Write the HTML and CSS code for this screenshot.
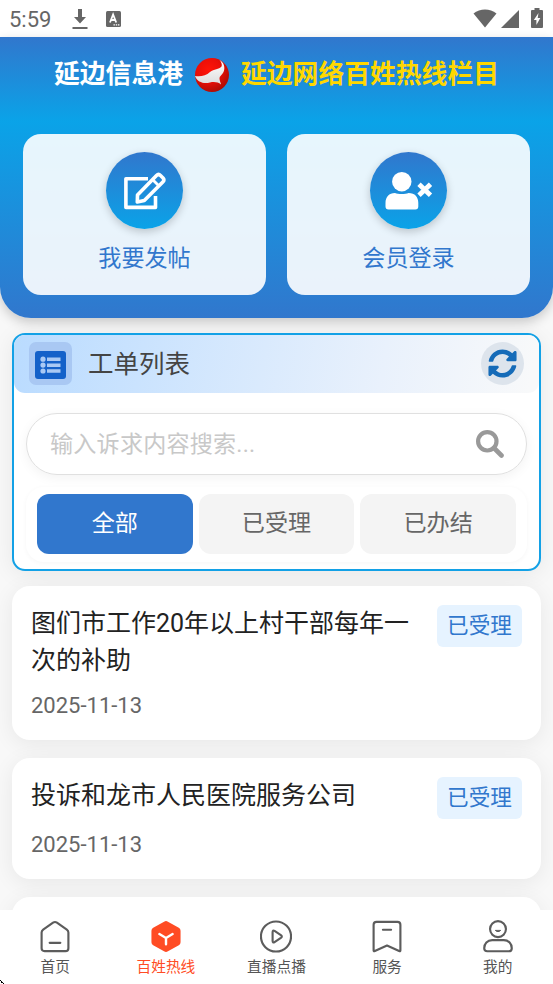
FILE: index.html
```html
<!DOCTYPE html>
<html lang="zh-CN">
<head>
  <meta charset="UTF-8">
  <meta name="viewport" content="width=device-width, initial-scale=1">
  <title>百姓热线</title>
  <link rel="stylesheet" href="styles.css">
</head>
<body>
  <div class="status-bar">
    <span class="time">5:59</span>
    <svg class="st-download" width="16" height="22" viewBox="0 0 16 22"><path d="M6 1h4v8h4l-6 6.5L2 9h4zM.5 19h15v2H.5z"/></svg>
    <svg class="st-app" width="15" height="16" viewBox="0 0 15 16"><rect width="15" height="16" rx="1.5"/><path d="M4 11.500L7.100 3.500L10.200 11.500M5 9h4.200" fill="none" stroke="#fff" stroke-width="1.8"/><path d="M7.500 13.200h1.400v1.300H7.500zM9.800 13.200h1.400v1.300H9.800zM12 13.200h1.400v1.300H12z" fill="#fff"/></svg>
    <span class="spacer"></span>
    <svg class="st-wifi" width="24" height="19" viewBox="0 0 24 19"><path d="M.5 4.500C7-.8 17-.8 23.500 4.500L12 18.500z"/></svg>
    <svg class="st-signal" width="18" height="18" viewBox="0 0 18 18"><path d="M18 0v18H0z"/></svg>
    <svg class="st-battery" width="12" height="20" viewBox="0 0 12 20"><path d="M3.500 0h5v2H11q1 0 1 1v16q0 1-1 1H1q-1 0-1-1V3q0-1 1-1h2.500z"/><path d="M7.500 5L2.800 12h2.600v5L9.300 10H6.700z" fill="#fff"/></svg>
  </div>

  <header class="header">
    <div class="brand">
      <span class="site">延边信息港</span>
      <svg class="logo" width="34" height="34" viewBox="0 0 34 34">
        <defs>
          <radialGradient id="red" cx=".4" cy=".35" r=".7"><stop offset="0" stop-color="#ff1408"/><stop offset=".5" stop-color="#ea0f08"/><stop offset="1" stop-color="#a80c04"/></radialGradient>
          <linearGradient id="wing" x1="0" y1="0" x2="0" y2="1"><stop offset="0" stop-color="#fff"/><stop offset="1" stop-color="#ddd"/></linearGradient>
        </defs>
        <circle cx="17" cy="17" r="17" fill="url(#red)"/>
        <path d="M0 18C5 19 11 18 15 14C19 10.500 24 12 26.500 8.500C27.500 6.500 26 3.500 24.500 2C29 4 30.500 10 28.500 14C27 17 24.500 18 24.500 20.500C24.500 23 26 25 26 26.500C23 24 19 23.500 15 24.500C9 26 2.500 24.500 0 18z" fill="url(#wing)"/>
      </svg>
      <span class="column">延边网络百姓热线栏目</span>
    </div>
    <div class="actions">
      <a class="action">
        <span class="circle">
          <svg width="42" height="38" viewBox="0 0 42 38" fill="none" stroke="#fff" stroke-width="3.600" stroke-linejoin="round"><path d="M24 6.800H1.900V35.400H31.500V24"/><path d="M13.500 23L32.500 3.500Q34.500 1.500 36.500 3.500L39 6Q40.800 8 38.800 10L20.300 28.500L13.300 30z"/><path d="M28.500 7.500L35 14" stroke-width="2.800"/></svg>
        </span>
        <span class="action-text">我要发帖</span>
      </a>
      <a class="action">
        <span class="circle">
          <svg width="48" height="38" viewBox="0 0 48 38"><circle cx="16.800" cy="9.700" r="9.700" fill="#fff"/><path d="M10 21C13 22.300 20.500 22.300 23.500 21C30 21 33.300 25 33.300 31V34.500Q33.300 37.500 30.300 37.500H3.500Q.5 37.500.5 34.500V31C.5 25 4 21 10 21z" fill="#fff"/><path d="M34 12.200L45.500 23.200M45.500 12.200L34 23.200" stroke="#fff" stroke-width="4.800"/></svg>
        </span>
        <span class="action-text">会员登录</span>
      </a>
    </div>
  </header>

  <main class="main">
    <section class="panel">
      <div class="panel-head">
        <span class="list-icon">
          <svg width="31" height="28" viewBox="0 0 31 28"><rect width="31" height="28" rx="3" fill="#1461c9"/><g fill="#a9c9f4"><circle cx="8" cy="8.200" r="2.600"/><circle cx="8" cy="14.100" r="2.600"/><circle cx="8" cy="20" r="2.600"/><path d="M12 6.500h13.500v3.500H12zM12 12.400h13.500v3.500H12zM12 18.300h13.500v3.500H12z"/></g></svg>
        </span>
        <h2>工单列表</h2>
        <span class="refresh">
          <svg width="29" height="29" viewBox="0 0 512 512"><path fill="#156bb8" d="M370.720 133.280C339.458 104.008 298.888 87.962 255.848 88c-77.458.068-144.328 53.178-162.791 126.850-1.344 5.363-6.122 9.150-11.651 9.150H24.103c-7.498 0-13.194-6.807-11.807-14.176C33.933 94.924 134.813 8 256 8c66.448 0 126.791 26.136 171.315 68.685L463.030 40.970C478.149 25.851 504 36.559 504 57.941V192c0 13.255-10.745 24-24 24H345.941c-21.382 0-32.090-25.851-16.971-40.971l41.750-41.749zM32 296h134.059c21.382 0 32.090 25.851 16.971 40.971l-41.750 41.750c31.262 29.273 71.835 45.319 114.876 45.280 77.418-.070 144.315-53.144 162.787-126.849 1.344-5.363 6.122-9.150 11.651-9.150h57.304c7.498 0 13.194 6.807 11.807 14.176C478.067 417.076 377.187 504 256 504c-66.448 0-126.791-26.136-171.315-68.685L48.970 471.030C33.851 486.149 8 475.441 8 454.059V320c0-13.255 10.745-24 24-24z"/></svg>
        </span>
      </div>
      <div class="search">
        <span class="placeholder">输入诉求内容搜索...</span>
        <svg width="28" height="28" viewBox="0 0 28 28" fill="none" stroke="#999"><circle cx="11.300" cy="11.300" r="9.200" stroke-width="4.200"/><path d="M18 18L25.500 25.500" stroke-width="4.600" stroke-linecap="round"/></svg>
      </div>
      <div class="tabs">
        <span class="tab active">全部</span>
        <span class="tab">已受理</span>
        <span class="tab">已办结</span>
      </div>
    </section>

    <article class="card">
      <div class="card-row">
        <h3>图们市工作20年以上村干部每年一次的补助</h3>
        <span class="tag">已受理</span>
      </div>
      <time>2025-11-13</time>
    </article>
    <article class="card">
      <div class="card-row">
        <h3>投诉和龙市人民医院服务公司</h3>
        <span class="tag">已受理</span>
      </div>
      <time>2025-11-13</time>
    </article>
    <article class="card"></article>
  </main>

  <nav class="tabbar">
    <a class="item">
      <svg viewBox="0 0 32 34"><path d="M3.800 10L14 2.700Q16 1.400 18 2.700L28.200 10Q29.800 11.200 29.800 13V29Q29.800 32 26.800 32H5.200Q2.200 32 2.200 29V13Q2.200 11.200 3.800 10zM10.500 23.500h11"/></svg>
      <span>首页</span>
    </a>
    <a class="item on">
      <svg viewBox="0 0 32 34"><path class="hex" d="M14 1.700Q16 .5 18 1.700L29.200 8Q31 9 31 11V23Q31 25 29.200 26L18 32.300Q16 33.500 14 32.300L2.800 26Q1 25 1 23V11Q1 9 2.800 8z"/><path class="fork" d="M9.200 14.500L16 18.500L22.800 14.500M16 18.500V25"/></svg>
      <span>百姓热线</span>
    </a>
    <a class="item">
      <svg viewBox="0 0 32 34"><circle cx="16" cy="17" r="15.500"/><path d="M12.500 12.500Q12.500 10 14.500 11.300L21 15.600Q23 17 21 18.400L14.500 22.700Q12.500 24 12.500 21.500z"/></svg>
      <span>直播点播</span>
    </a>
    <a class="item">
      <svg viewBox="0 0 32 34"><path d="M2.200 5Q2.200 2 5.200 2H26.800Q29.800 2 29.800 5V31.500Q29.800 32.500 28.500 32L16 26.300L3.500 32Q2.200 32.500 2.200 31.500zM11.800 10h8.400"/></svg>
      <span>服务</span>
    </a>
    <a class="item">
      <svg viewBox="0 0 32 34"><circle cx="16" cy="9.400" r="8.200"/><path class="smile" d="M13.500 11Q16 13.500 18.500 11z"/><path d="M10 20.800H22C27 20.800 30.200 24.500 30.200 29Q30.200 32.200 27 32.200H5Q1.800 32.200 1.800 29C1.800 24.500 5 20.800 10 20.800z"/></svg>
      <span>我的</span>
    </a>
    <svg class="corner" width="4" height="4"><path d="M0 0h1v1H0zM1 1h1v2H1zM2 2h1v1H2zM3 3h1v1H3z"/></svg>
  </nav>
</body>
</html>
```
FILE: styles.css
```css
* {
  box-sizing: border-box;
}

body {
  margin: 0;
  height: 984px;
  display: flex;
  flex-direction: column;
  overflow: hidden;
  background: #f8f8f8;
  font-family: Roboto, "Noto Sans CJK SC", sans-serif;
  color: #222;
}

svg {
  display: block;
  flex: none;
}

.status-bar {
  flex: none;
  height: 37px;
  padding: 0 10px 0 9px;
  display: flex;
  align-items: center;
  background: #fff;
  color: #666;
  fill: #666;
}

.time {
  width: 63px;
  font-size: 22px;
  line-height: 37px;
  padding-top: 1px;
}

.st-app {
  margin-left: 18px;
}

.spacer {
  flex: 1;
}

.st-wifi {
  margin-top: -1px;
}

.st-signal {
  margin-left: 4px;
}

.st-battery {
  margin-left: 12px;
  margin-top: -1px;
}

.header {
  flex: none;
  height: 281px;
  padding: 18px 23px 0;
  background: linear-gradient(180deg, #3177cd 0%, #0aa3e8 30%, #3177cd 100%);
  border-radius: 0 0 31px 31px;
  box-shadow: 0 4px 12px rgba(0, 0, 0, 0.2);
}

.brand {
  height: 38px;
  display: flex;
  justify-content: center;
  align-items: center;
  gap: 12px;
  font-size: 25.8px;
  font-weight: bold;
  line-height: 36px;
  white-space: nowrap;
}

.logo {
  margin-top: 2px;
}

.site {
  color: #fff;
}

.column {
  color: #ffd700;
}

.actions {
  display: grid;
  grid-template-columns: 1fr 1fr;
  gap: 21px;
  margin-top: 41px;
}

.action {
  height: 161px;
  padding-top: 18px;
  display: flex;
  flex-direction: column;
  align-items: center;
  background: rgba(255, 255, 255, 0.9);
  border-radius: 18px;
}

.circle {
  width: 77px;
  height: 77px;
  display: flex;
  align-items: center;
  justify-content: center;
  border-radius: 50%;
  background: linear-gradient(180deg, #3177cd, #0aa3e8);
  box-shadow: 0 3px 8px rgba(0, 0, 0, 0.2);
}

.action-text {
  margin-top: 13px;
  font-size: 23.1px;
  line-height: 34px;
  color: #3177cd;
}

.main {
  flex: 1;
  min-height: 0;
  overflow: hidden;
  padding: 15px 12px 0;
}

.panel {
  height: 238px;
  border: 2px solid #13a1e6;
  border-radius: 13px;
  background: #fff;
  box-shadow: 0 3px 22px rgba(0, 0, 0, 0.07);
}

.panel-head {
  height: 58px;
  padding: 0 15px 2px;
  display: flex;
  align-items: center;
  background: linear-gradient(100deg, #bbdefb, #bbdcff 2%, #e9f1fc 70%, #f8f9fa 98%);
  border-radius: 11px;
}

.list-icon,
.refresh {
  width: 43px;
  height: 43px;
  display: flex;
  align-items: center;
  justify-content: center;
}

.list-icon {
  padding-top: 3px;
  border-radius: 7px;
  background: #a9c8f3;
}

.refresh {
  margin-left: auto;
  padding-right: 1px;
  border-radius: 50%;
  background: #dde4ec;
}

.panel-head h2 {
  margin: 1px 0 0 16px;
  font-size: 25.5px;
  font-weight: normal;
  line-height: 38px;
  color: #444;
}

.search {
  height: 62px;
  margin: 20px 12px 12px;
  padding: 0 22px 1px 23px;
  display: flex;
  align-items: center;
  justify-content: space-between;
  border: 1.5px solid #e0e0e0;
  border-radius: 31px;
  box-shadow: 0 3px 12px rgba(0, 0, 0, 0.05);
}

.placeholder {
  padding-bottom: 3px;
  font-size: 23.1px;
  letter-spacing: 0.2px;
  color: #c8c8c8;
}

.tabs {
  height: 75px;
  margin: 0 12px;
  padding: 7px 11px 8px;
  display: grid;
  grid-template-columns: repeat(3, 1fr);
  gap: 6px;
  border-radius: 18px;
  box-shadow: 0 1px 5px rgba(0, 0, 0, 0.04);
}

.tab {
  padding-top: 1px;
  border-radius: 12px;
  background: #f4f4f4;
  color: #666;
  font-size: 23.1px;
  line-height: 58px;
  text-align: center;
}

.tab.active {
  background: #3177cd;
  color: #fff;
}

.card {
  margin-top: 15px;
  padding: 18px 19px;
  min-height: 120px;
  background: #fff;
  border-radius: 18px;
  box-shadow: 0 4px 22px rgba(0, 0, 0, 0.07);
}

.card + .card {
  margin-top: 18px;
}

.card-row {
  display: flex;
  align-items: flex-start;
  justify-content: space-between;
}

.card h3 {
  width: 385px;
  margin: 1px 0 0;
  font-size: 25px;
  font-weight: normal;
  line-height: 37px;
  color: #222;
}

.tag {
  flex: none;
  width: 85px;
  margin: 1px 0 -1px;
  border-radius: 6px;
  background: #e6f3ff;
  color: #3177cd;
  font-size: 21.6px;
  line-height: 42px;
  text-align: center;
}

.card time {
  display: block;
  margin-top: 11px;
  font-size: 22px;
  line-height: 32px;
  color: #666;
}

.tabbar {
  position: relative;
  flex: none;
  height: 74px;
  padding-top: 10px;
  display: grid;
  grid-template-columns: repeat(5, 1fr);
  background: #fff;
}

.item {
  display: flex;
  flex-direction: column;
  align-items: center;
  font-size: 14.7px;
  line-height: 22px;
  color: #555;
}

.item svg {
  width: 32px;
  height: 33px;
  margin-bottom: 3px;
  fill: none;
  stroke: #5c5c5c;
  stroke-width: 2.2;
  stroke-linejoin: round;
  stroke-linecap: round;
}

.item.on {
  color: #ff4c24;
}

.item .hex {
  fill: #ff4c24;
  stroke: none;
}

.item .fork {
  stroke: #fff;
  stroke-width: 2.5;
}

.item .smile {
  fill: #5c5c5c;
  stroke-width: 1;
}

.corner {
  position: absolute;
  left: 0;
  bottom: 0;
}
```
